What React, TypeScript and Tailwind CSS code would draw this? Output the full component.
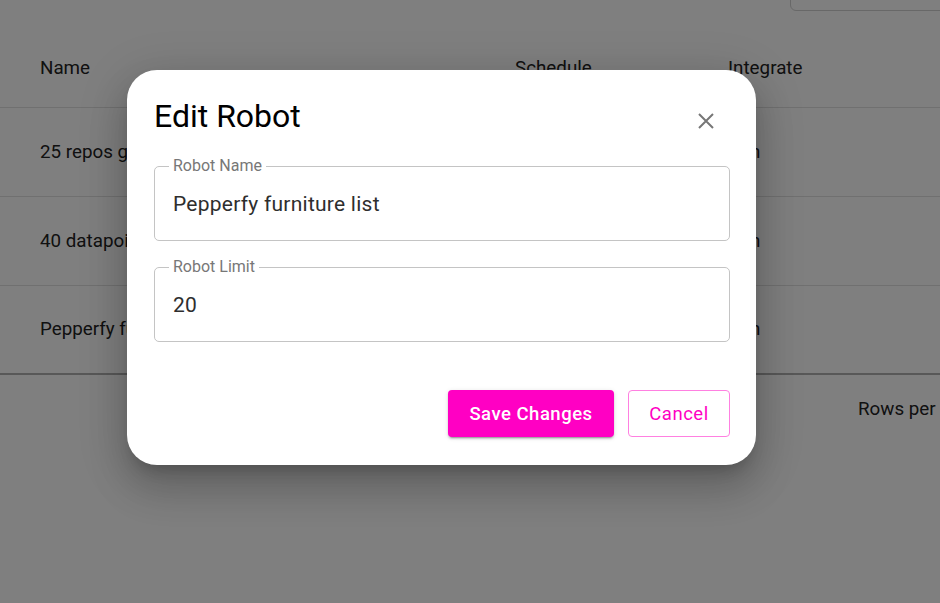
import { ReactNode } from "react";

const rows = [
  { name: "25 repos github trending", schedule: "", integrate: "Run" },
  { name: "40 datapoints product hunt", schedule: "", integrate: "Run" },
  { name: "Pepperfy furniture list", schedule: "", integrate: "Run" },
];

function Field({ label, value }: { label: string; value: string }) {
  return (
    <div className="relative h-[75px] rounded-[5px] border border-[#c4c4c4] flex items-center pl-[18px]">
      <span className="absolute left-[14px] -top-[11px] bg-white px-[4px] text-[16px] leading-[20px] text-[#777]">
        {label}
      </span>
      <span className="text-[21px] tracking-[0.25px] text-[#2e2e2e] pt-[3px]">{value}</span>
    </div>
  );
}

function Cell({ children }: { children: ReactNode }) {
  return <div className="whitespace-nowrap overflow-hidden">{children}</div>;
}

export default function App() {
  return (
    <div
      className="relative h-[603px] w-[940px] overflow-hidden bg-white text-[18.8px] text-[#222]"
      style={{ fontFamily: "Roboto, 'Noto Sans', sans-serif" }}
    >
      {/* TOP SEARCH */}
      <div className="flex justify-end h-[30px]">
        <div className="w-[170px] h-[56px] -mt-[45px] -mr-[20px] rounded-[6px] border border-[#d0d0d0]" />
      </div>

      {/* TABLE */}
      <div className="grid grid-cols-[475px_213px_1fr] items-center h-[78px] pl-[40px] border-b border-[#e0e0e0]">
        <Cell>Name</Cell>
        <Cell>Schedule</Cell>
        <Cell>Integrate</Cell>
      </div>
      {rows.map((r, i) => (
        <div
          key={r.name}
          className={`grid grid-cols-[475px_213px_1fr] items-center h-[89px] pl-[40px] ${
            i === rows.length - 1 ? "border-b-2 border-[#b0b0b0]" : "border-b border-[#e0e0e0]"
          }`}
        >
          <Cell>{r.name}</Cell>
          <Cell>{r.schedule}</Cell>
          <Cell>{r.integrate}</Cell>
        </div>
      ))}
      <div className="flex justify-end h-[68px] items-center">
        <span className="w-[82px] whitespace-nowrap overflow-hidden">Rows per page:</span>
      </div>

      {/* OVERLAY */}
      <div className="absolute inset-0 bg-black/50 pl-[127px] pt-[70px]">
        <div className="w-[629px] h-[395px] bg-white rounded-[30px] shadow-[0_11px_15px_-7px_rgba(0,0,0,0.2),0_24px_38px_3px_rgba(0,0,0,0.14),0_9px_46px_8px_rgba(0,0,0,0.12)] pr-[26px] pl-[27px] pt-[26px] flex flex-col">
          <div className="flex items-center justify-between h-[40px]">
            <h2 className="text-[32px] leading-[40px] text-black">Edit Robot</h2>
            <button className="w-[24px] h-[24px] mr-[12px] mt-[10px] flex items-center justify-center">
              <svg width="16" height="16" viewBox="0 0 16 16">
                <path d="M1 1 L15 15 M15 1 L1 15" stroke="#777" strokeWidth="2" />
              </svg>
            </button>
          </div>

          <div className="mt-[30px] flex flex-col gap-[26px]">
            <Field label="Robot Name" value="Pepperfy furniture list" />
            <Field label="Robot Limit" value="20" />
          </div>

          <div className="mt-[48px] flex justify-end gap-[14px]">
            <button className="h-[47px] w-[166px] pt-[2px] rounded-[4px] bg-[#ff00c3] text-white text-[18.5px] tracking-[0.5px] font-medium shadow-[0_3px_1px_-2px_rgba(0,0,0,0.2),0_2px_2px_0_rgba(0,0,0,0.14),0_1px_5px_0_rgba(0,0,0,0.12)]">
              Save Changes
            </button>
            <button className="h-[47px] w-[102px] pt-[2px] rounded-[4px] border border-[#ff80e1] text-[#ff00c3] text-[18.5px] tracking-[0.5px]">
              Cancel
            </button>
          </div>
        </div>
      </div>
    </div>
  );
}
